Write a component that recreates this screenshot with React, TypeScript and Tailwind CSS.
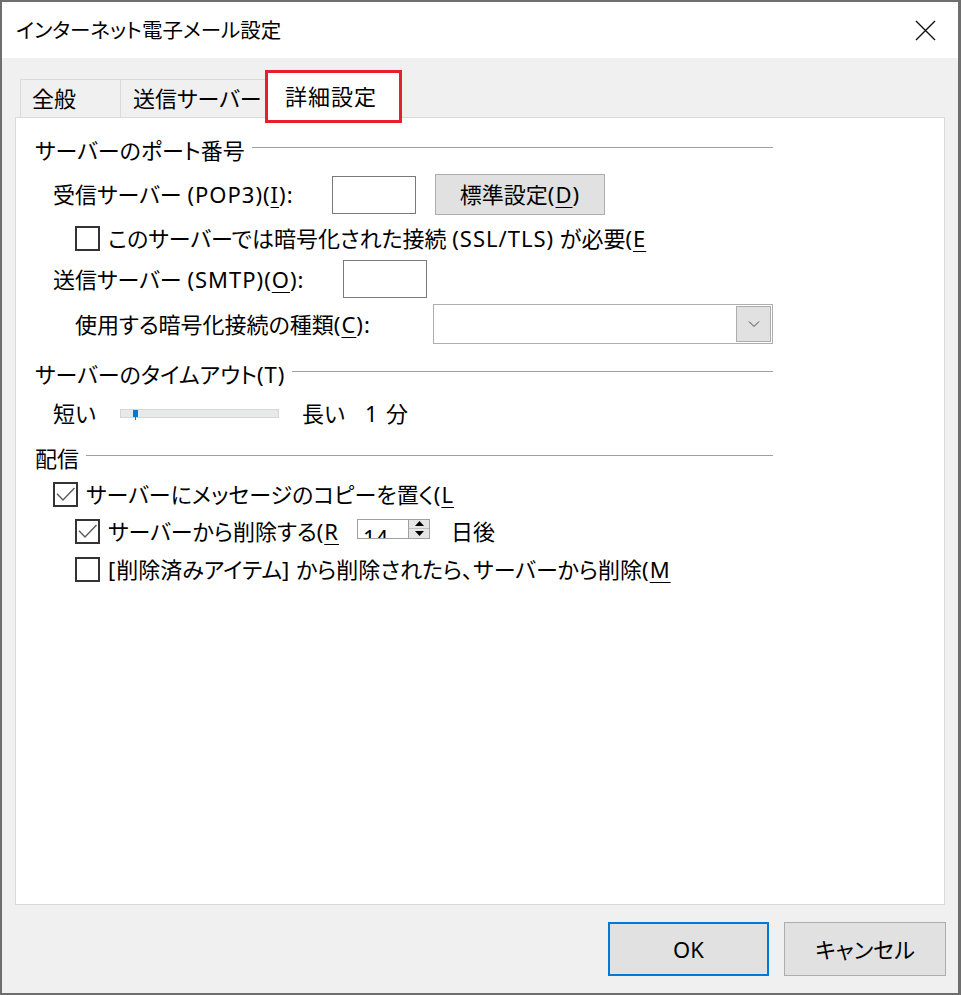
import React from 'react';

const font = "font-['Noto_Sans','Noto_Sans_CJK_JP',sans-serif] [font-feature-settings:'palt']";

const Key: React.FC<{ k: string }> = ({ k }) => (
  <span className="underline decoration-1 underline-offset-[4px]">{k}</span>
);

// latin runs are a bit wider in the original UI font
const L: React.FC<{ children: React.ReactNode }> = ({ children }) => (
  <span className="tracking-[1px]">{children}</span>
);

const CheckBox: React.FC<{ checked?: boolean }> = ({ checked }) => (
  <div className="flex h-[25px] w-[25px] shrink-0 items-center justify-center border-2 border-[#333333] bg-white">
    {checked && (
      <svg width="21" height="21" viewBox="0 0 21 21">
        <path d="M2 9.7 L8 16 L19.5 4" fill="none" stroke="#5a5a5a" strokeWidth="1.4" />
      </svg>
    )}
  </div>
);

const GroupHeader: React.FC<{ children: React.ReactNode }> = ({ children }) => (
  <div className="flex h-[28px] items-center">
    <span className="leading-[28px] whitespace-nowrap">{children}</span>
    <div className="mb-[6px] ml-[7px] h-px flex-1 bg-[#a0a0a0]" />
  </div>
);

const App: React.FC = () => {
  return (
    <div className={`h-[995px] w-[961px] bg-[#6e6e6e] pb-[2px] pl-[2px] pr-[3px] pt-[2px] text-black ${font}`}>
      <div className="flex h-full flex-col bg-[#f0f0f0]">
        {/* title bar */}
        <div className="flex h-[56px] shrink-0 items-center justify-between bg-white pl-[14px] pr-[22px]">
          <span className="text-[20.5px] leading-[28px]">インターネット電子メール設定</span>
          <svg width="21" height="21" viewBox="0 0 21 21">
            <path d="M1 1 L20 20 M20 1 L1 20" stroke="#111" strokeWidth="1.4" />
          </svg>
        </div>

        {/* tabs */}
        <div className="mt-[12px] flex h-[47px] shrink-0 items-start pl-[18px] text-[22px]">
          <div className="mt-[9px] flex h-[38px] w-[101px] items-center border-l border-r border-t border-[#d9d9d9] pl-[11px]">
            全般
          </div>
          <div className="mt-[9px] flex h-[38px] w-[144px] items-center border-t border-[#d9d9d9] pl-[12px]">
            送信サーバー
          </div>
          <div className="relative z-10 flex h-[53px] w-[137px] items-center border-[3px] border-[#e51f2b] bg-white pl-[17px] tracking-[1px]">
            詳細設定
          </div>
        </div>

        {/* panel */}
        <div className="ml-[13px] h-[788px] w-[930px] shrink-0 border border-[#d9d9d9] bg-white pl-[19px] pt-[18px] text-[22px]">
          <div className="w-[738px]">
            <GroupHeader>サーバーのポート番号</GroupHeader>

            <div className="mt-[10px] flex h-[41px] items-center pl-[18px]">
              <span className="w-[279px] whitespace-nowrap">
                受信サーバー <L>(POP3)(<Key k="I" />):</L>
              </span>
              <div className="h-[38px] w-[84px] border border-[#7a7a7a]" />
              <div className="ml-[19px] flex h-[41px] w-[170px] items-center justify-center border border-[#adadad] bg-[#e1e1e1]">
                標準設定<L>(<Key k="D" />)</L>
              </div>
            </div>

            <div className="mt-[11px] flex h-[25px] items-center pl-[40px]">
              <CheckBox />
              <span className="ml-[8px] whitespace-nowrap">
                このサーバーでは暗号化された接続 <L>(SSL/TLS)</L> が必要<L>(<Key k="E" /></L>
              </span>
            </div>

            <div className="mt-[9px] flex h-[38px] items-center pl-[18px]">
              <span className="w-[290px] whitespace-nowrap">
                送信サーバー <L>(SMTP)(<Key k="O" />):</L>
              </span>
              <div className="h-[38px] w-[84px] border border-[#7a7a7a]" />
            </div>

            <div className="mt-[6px] flex h-[40px] items-center pl-[40px]">
              <span className="w-[358px] whitespace-nowrap">
                使用する暗号化接続の種類<L>(<Key k="C" />):</L>
              </span>
              <div className="flex h-[40px] w-[340px] justify-end border border-[#adadad] p-[1px]">
                <div className="flex h-full w-[35px] items-center justify-center border border-[#adadad] bg-[#e1e1e1]">
                  <svg width="12" height="8" viewBox="0 0 12 8">
                    <path d="M1 1.5 L6 6.5 L11 1.5" fill="none" stroke="#444" strokeWidth="1" />
                  </svg>
                </div>
              </div>
            </div>

            <div className="mt-[16px]">
              <GroupHeader>
                サーバーのタイムアウト<L>(T)</L>
              </GroupHeader>
            </div>

            <div className="mt-[11px] flex h-[28px] items-center pl-[18px]">
              <span className="w-[67px]">短い</span>
              <div className="relative h-[9px] w-[159px] border border-[#d6d6d6] bg-[#e7eaea]">
                <div className="absolute left-[12px] top-0 h-[7px] w-[5px] bg-[#0078d7]" />
                <div className="absolute left-[14px] top-[7px] h-[3px] w-px bg-[#0078d7]" />
              </div>
              <span className="ml-[23px] w-[63px]">長い</span>
              <span className="w-[21px]">1</span>
              <span>分</span>
            </div>

            <div className="mt-[17px]">
              <GroupHeader>配信</GroupHeader>
            </div>

            <div className="mt-[10px] flex h-[25px] items-center pl-[18px]">
              <CheckBox checked />
              <span className="ml-[8px] whitespace-nowrap">
                サーバーにメッセージのコピーを置く<L>(<Key k="L" /></L>
              </span>
            </div>

            <div className="mt-[12px] flex h-[25px] items-center pl-[40px]">
              <CheckBox checked />
              <span className="ml-[8px] w-[249px] whitespace-nowrap">
                サーバーから削除する<L>(<Key k="R" /></L>
              </span>
              <div className="mb-[6px] flex h-[20px] w-[73px] overflow-hidden border border-[#a0a0a0] bg-white">
                <div className="flex-1 pl-[5px] pt-[6px] text-[22px] leading-[22px]">14</div>
                <div className="flex w-[21px] flex-col border-l border-[#a0a0a0] bg-[#e6e6e6]">
                  <div className="flex flex-1 items-center justify-center border-b border-[#c0c0c0]">
                    <svg width="9" height="5" viewBox="0 0 9 5">
                      <path d="M0 5 L4.5 0 L9 5 Z" fill="#000" />
                    </svg>
                  </div>
                  <div className="flex flex-1 items-center justify-center">
                    <svg width="9" height="5" viewBox="0 0 9 5">
                      <path d="M0 0 L4.5 5 L9 0 Z" fill="#000" />
                    </svg>
                  </div>
                </div>
              </div>
              <span className="ml-[21px]">日後</span>
            </div>

            <div className="mt-[13px] flex h-[25px] items-center pl-[40px]">
              <CheckBox />
              <span className="ml-[8px] whitespace-nowrap">
                <L>[</L>削除済みアイテム<L>]</L> から削除されたら、サーバーから削除<L>(<Key k="M" /></L>
              </span>
            </div>
          </div>
        </div>

        {/* buttons */}
        <div className="mt-[17px] flex justify-end gap-[15px] pr-[12px] text-[22px]">
          <div className="flex h-[54px] w-[161px] items-center justify-center border-2 border-[#0078d7] bg-[#e1e1e1]">
            OK
          </div>
          <div className="flex h-[54px] w-[162px] items-center justify-center border border-[#adadad] bg-[#e1e1e1]">
            キャンセル
          </div>
        </div>
      </div>
    </div>
  );
};

export default App;
